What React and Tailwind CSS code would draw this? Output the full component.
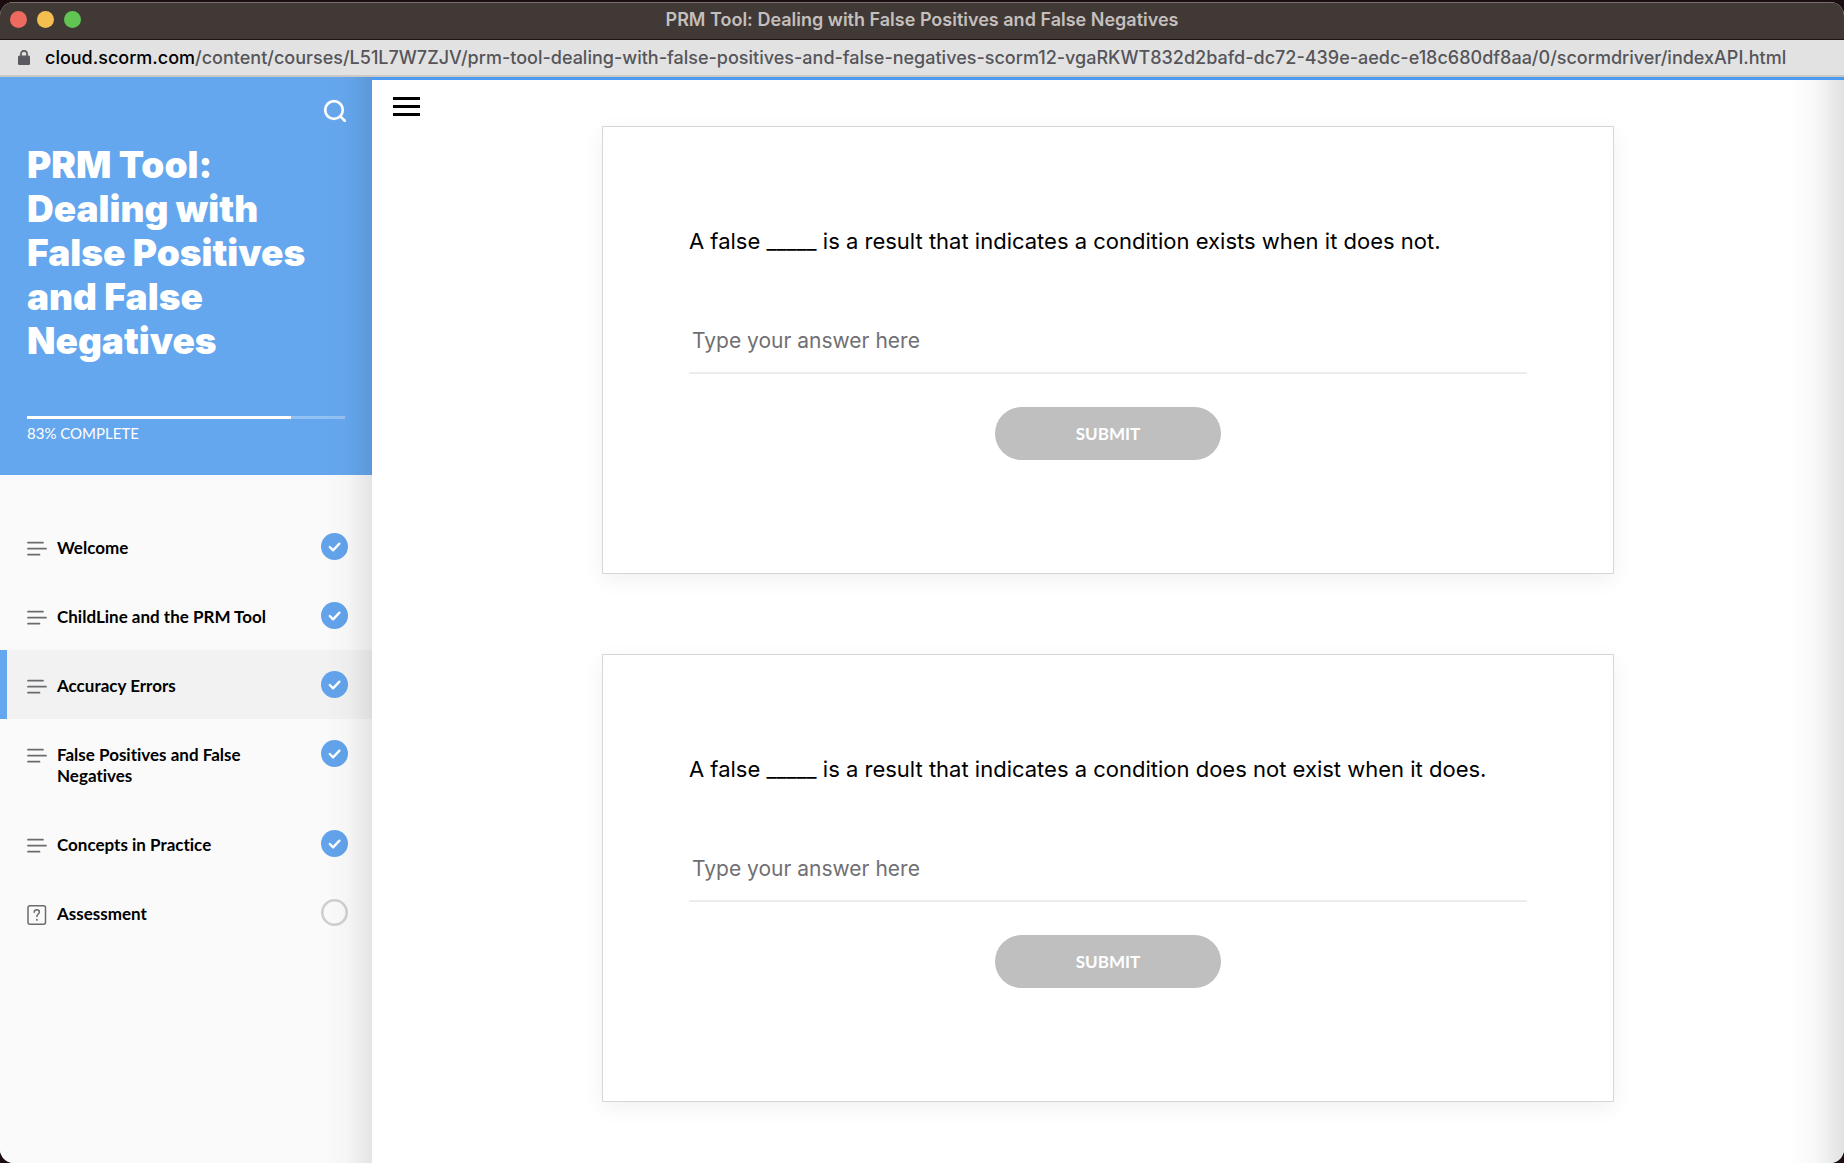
import React from 'react';

const lessons = [
  { title: 'Welcome', done: true },
  { title: 'ChildLine and the PRM Tool', done: true },
  { title: 'Accuracy Errors', done: true, active: true },
  { title: 'False Positives and False Negatives', done: true },
  { title: 'Concepts in Practice', done: true },
  { title: 'Assessment', quiz: true },
];

const questions = [
  'is a result that indicates a condition exists when it does not.',
  'is a result that indicates a condition does not exist when it does.',
];

function LessonIcon({ quiz }) {
  if (quiz) {
    return (
      <svg viewBox="0 0 20 20" className="mt-1.5 size-5 shrink-0" fill="none" stroke="#6b6b6f" strokeWidth="1.5" strokeLinecap="round" aria-hidden="true">
        <rect x="1" y="0.8" width="17.5" height="18.400" rx="2" />
        <path d="M7.2 7.2c.1-1.500 1.200-2.400 2.600-2.400s2.600.9 2.600 2.300c0 1.900-2.500 2.100-2.500 4.400" />
        <path d="M9.900 14.700v.2" strokeWidth="1.800" />
      </svg>
    );
  }
  return (
    <svg viewBox="0 0 20 20" className="mt-1.5 size-5 shrink-0" fill="none" stroke="#6b6b6f" strokeWidth="1.7" strokeLinecap="round" aria-hidden="true">
      <path d="M1 3.700h15M1 9.700h18M1 15.700h11.500" />
    </svg>
  );
}

function Status({ done }) {
  return done ? (
    <svg viewBox="0 0 27 27" className="size-[27px] shrink-0" role="img" aria-label="Completed">
      <circle cx="13.500" cy="13.500" r="13.500" fill="#62a3eb" />
      <path d="M8.800 14l3.300 3.300 6.300-6.600" fill="none" stroke="#fff" strokeWidth="2.400" strokeLinecap="round" strokeLinejoin="round" />
    </svg>
  ) : (
    <svg viewBox="0 0 27 27" className="size-[27px] shrink-0" role="img" aria-label="Not started">
      <circle cx="13.500" cy="13.500" r="12.200" fill="none" stroke="#cfcfcf" strokeWidth="2.600" />
    </svg>
  );
}

function Sidebar() {
  return (
    <aside className="relative flex w-[372px] shrink-0 flex-col bg-[#fafafa]">
      <div className="flex flex-col bg-[#65a7ee] px-[27px] pt-5 pb-8 text-white">
        <button type="button" aria-label="Search" className="-mr-1 flex size-7 items-center justify-center self-end">
          <svg viewBox="0 0 24 24" className="size-6" fill="none" stroke="currentColor" strokeWidth="2.700" strokeLinecap="round" aria-hidden="true">
            <circle cx="11" cy="11" r="8.800" />
            <path d="M17.600 17.600l4.200 4.200" />
          </svg>
        </button>
        <h1 className="mt-[18px] font-['Inter',sans-serif] text-[37px] leading-[44px] font-black">
          PRM Tool: Dealing with False Positives and False Negatives
        </h1>
        <div className="mt-[53px] h-[3px] bg-white/30">
          <div className="h-full w-[83%] bg-white" />
        </div>
        <p className="mt-1 text-[15px] leading-5">83% COMPLETE</p>
      </div>
      <nav className="flex flex-col pt-[37px]">
        {lessons.map((l) => (
          <a
            key={l.title}
            href="#"
            aria-current={l.active ? 'page' : undefined}
            className={
              l.active
                ? 'flex items-start border-l-[7px] border-[#65a7ee] bg-[#f2f2f2] py-[21px] pr-6 pl-5'
                : 'flex items-start border-l-[7px] border-transparent py-[21px] pr-6 pl-5'
            }
          >
            <LessonIcon quiz={l.quiz} />
            <span className="ml-2.5 flex-1 pt-1 pr-8 pb-0.5 text-[17px] leading-[21px] font-bold text-black [font-variant-ligatures:none]">{l.title}</span>
            <Status done={l.done} />
          </a>
        ))}
      </nav>
      <div className="pointer-events-none absolute inset-y-0 right-0 w-12 bg-linear-to-r from-transparent via-black/2 to-black/9" />
    </aside>
  );
}

function QuestionCard({ text, id }) {
  return (
    <form
      onSubmit={(e) => e.preventDefault()}
      className="flex w-full max-w-[1012px] flex-col items-center border border-[#d6d6d6] bg-white px-[86px] pt-24 pb-[113px] shadow-[0_6px_20px_rgba(0,0,0,0.06)]"
    >
      <label htmlFor={id} className="w-full font-['Inter',sans-serif] text-[22px] leading-9 text-black">
        A false _____ {text}
      </label>
      <input
        id={id}
        type="text"
        placeholder="Type your answer here"
        className="mt-[46px] h-[69px] w-full border-b-2 border-[#ececec] px-[3px] pt-[3px] font-['Inter',sans-serif] text-[21px] text-black outline-none placeholder:text-[#707074]"
      />
      <button type="submit" className="mt-[33px] h-[53px] w-[226px] rounded-full bg-[#bfbfbf] text-[17px] font-bold text-white">
        SUBMIT
      </button>
    </form>
  );
}

export default function App() {
  return (
    <div className="min-h-screen bg-[#1b0d10] pt-0.5 font-['Lato',sans-serif]">
      <div className="flex min-h-[calc(100vh-2px)] flex-col overflow-hidden rounded-[14px] bg-white">
        <header className="flex h-[38px] items-center border-t border-b border-t-[#77706d] border-b-[#1d1513] bg-[#403936] px-2.5 pb-[3px]">
          <div className="flex flex-1 gap-2.5">
            <button type="button" aria-label="Close" className="size-[17px] rounded-full bg-[#ee6a5f]" />
            <button type="button" aria-label="Minimize" className="size-[17px] rounded-full bg-[#f5bf4f]" />
            <button type="button" aria-label="Zoom" className="size-[17px] rounded-full bg-[#61c554]" />
          </div>
          <p className="font-['Inter',sans-serif] text-lg leading-6 font-semibold text-[#c4bfbd]">
            PRM Tool: Dealing with False Positives and False Negatives
          </p>
          <div className="flex-1" />
        </header>
        <div className="flex h-[37px] items-center border-b-2 border-[#cbc9c6] bg-[#e2e2e2] pl-[18px] font-['Inter',sans-serif] text-lg font-medium whitespace-nowrap text-[#55555a]">
          <svg viewBox="0 0 12 15" className="mr-[15px] h-[15px] w-3 shrink-0" aria-hidden="true">
            <rect y="5.500" width="12" height="9.500" rx="1.500" fill="#5a5a60" />
            <path d="M3 6V3.800a3 3 0 0 1 6 0V6" fill="none" stroke="#5a5a60" strokeWidth="1.700" />
          </svg>
          <span>
            <span className="text-black">cloud.scorm.com</span>
            /content/courses/L51L7W7ZJV/prm-tool-dealing-with-false-positives-and-false-negatives-scorm12-vgaRKWT832d2bafd-dc72-439e-aedc-e18c680df8aa/0/scormdriver/indexAPI.html
          </span>
        </div>
        <div className="flex flex-1">
          <Sidebar />
          <main className="relative flex-1 border-t-[3px] border-[#4d9bf0] bg-white">
            <button type="button" aria-label="Toggle navigation" className="absolute top-4 left-[21px] flex h-[21px] w-[27px] flex-col justify-between py-px">
              <span className="h-[3px] w-full bg-black" />
              <span className="h-[3px] w-full bg-black" />
              <span className="h-[3px] w-full bg-black" />
            </button>
            <div className="flex flex-col items-center gap-20 pt-[46px] pb-10">
              {questions.map((q, i) => (
                <QuestionCard key={q} text={q} id={`answer-${i}`} />
              ))}
            </div>
            <div className="pointer-events-none absolute inset-y-0 right-0 w-14 bg-linear-to-r from-transparent via-black/3 to-black/12" />
          </main>
        </div>
      </div>
    </div>
  );
}
